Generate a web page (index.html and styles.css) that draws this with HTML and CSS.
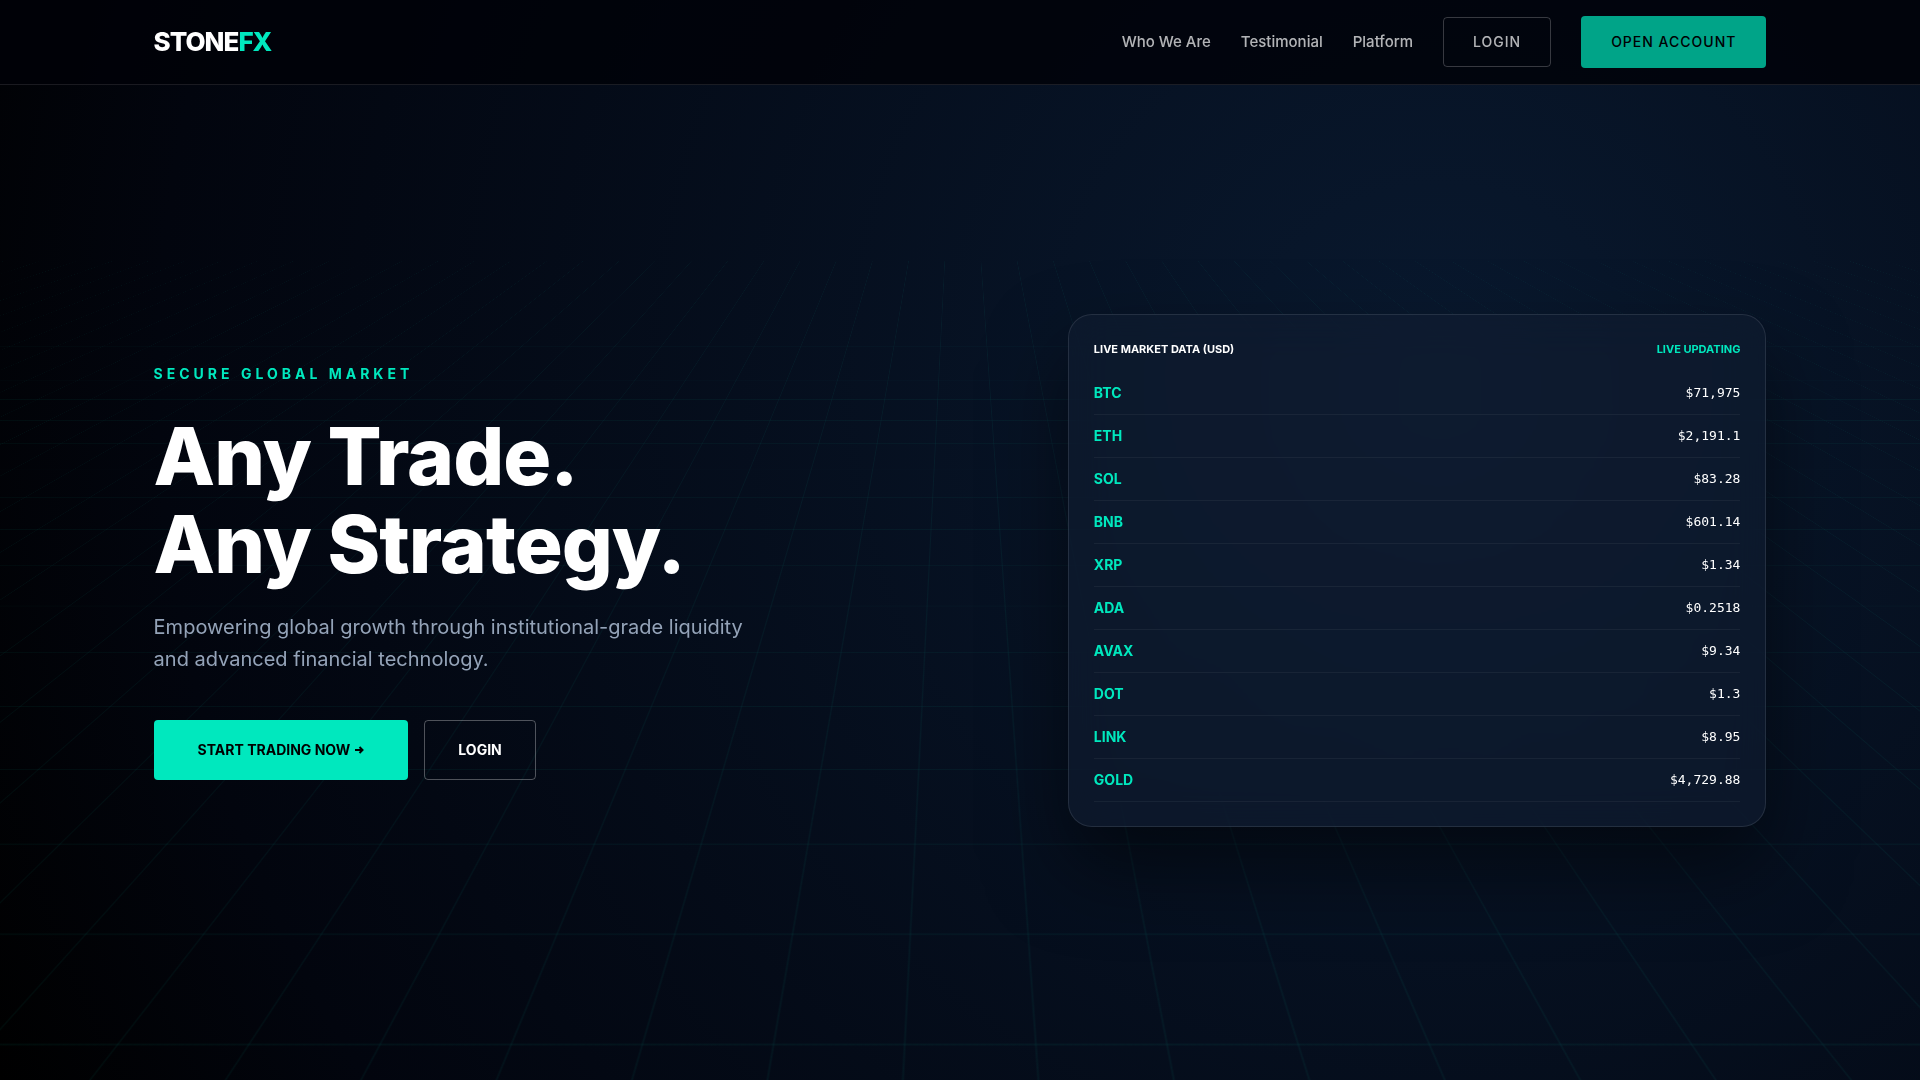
FILE: index.html
```html
<!DOCTYPE html>
<html lang="en">
<head>
<meta charset="utf-8">
<meta name="viewport" content="width=device-width, initial-scale=1">
<title>StoneFX</title>
<link rel="stylesheet" href="styles.css">
</head>
<body>
<div class="backdrop" aria-hidden="true"><div class="backdrop-grid"></div></div>

<header class="site-header">
  <a class="logo" href="#">STONE<span class="logo-accent">FX</span></a>
  <nav class="nav">
    <a class="nav-link" href="#about">Who We Are</a>
    <a class="nav-link" href="#testimonial">Testimonial</a>
    <a class="nav-link" href="#platform">Platform</a>
    <a class="nav-link nav-login" href="#login">LOGIN</a>
    <a class="nav-link nav-open" href="#register">OPEN ACCOUNT</a>
  </nav>
</header>

<main class="hero">
  <section class="intro">
    <p class="eyebrow">SECURE GLOBAL MARKET</p>
    <h1 class="headline">Any Trade.<br>Any Strategy.</h1>
    <p class="lead">Empowering global growth through institutional-grade liquidity and advanced financial technology.</p>
    <div class="actions">
      <a class="btn btn-primary" href="#register">START TRADING NOW
        <svg class="arrow" viewBox="0 0 10 10" aria-hidden="true"><path d="M1 5H8.5M5.5 2L8.5 5L5.5 8"/></svg>
      </a>
      <a class="btn btn-outline" href="#login">LOGIN</a>
    </div>
  </section>

  <section class="market">
    <div class="market-head">
      <h2 class="market-title" id="market-title">LIVE MARKET DATA (USD)</h2>
      <span class="market-status">LIVE UPDATING</span>
    </div>
    <table class="prices" aria-labelledby="market-title">
      <tbody>
        <tr><th scope="row">BTC</th><td>$71,975</td></tr>
        <tr><th scope="row">ETH</th><td>$2,191.1</td></tr>
        <tr><th scope="row">SOL</th><td>$83.28</td></tr>
        <tr><th scope="row">BNB</th><td>$601.14</td></tr>
        <tr><th scope="row">XRP</th><td>$1.34</td></tr>
        <tr><th scope="row">ADA</th><td>$0.2518</td></tr>
        <tr><th scope="row">AVAX</th><td>$9.34</td></tr>
        <tr><th scope="row">DOT</th><td>$1.3</td></tr>
        <tr><th scope="row">LINK</th><td>$8.95</td></tr>
        <tr><th scope="row">GOLD</th><td>$4,729.88</td></tr>
      </tbody>
    </table>
  </section>
</main>
</body>
</html>
```
FILE: styles.css
```css
:root {
  --accent: #00e8be;
  --muted: #94a3b8;
  --line: rgba(255, 255, 255, 0.1);
}

* {
  box-sizing: border-box;
}

body {
  margin: 0;
  min-height: 100vh;
  display: flex;
  flex-direction: column;
  background: #000;
  color: #fff;
  font-family: Inter, "Liberation Sans", sans-serif;
}

a {
  color: inherit;
  text-decoration: none;
}

h1, h2, p {
  margin: 0;
}

/* Tilted grid floor behind the page */
.backdrop {
  position: fixed;
  inset: 0;
  z-index: -1;
  overflow: hidden;
  background: radial-gradient(circle at 75% 35%, #09192f 0%, #02050e 80%, #000 100%);
}

.backdrop-grid {
  position: absolute;
  inset: -50%;
  background-image:
    linear-gradient(rgba(0, 232, 190, 0.05) 1px, transparent 1px),
    linear-gradient(90deg, rgba(0, 232, 190, 0.05) 1px, transparent 1px);
  background-size: 70px 70px;
  background-position: 0 8px;
  transform: perspective(1000px) rotateX(60deg);
}

.site-header {
  display: flex;
  align-items: center;
  justify-content: space-between;
  padding: 16px 8%;
  background: rgba(0, 1, 8, 0.8);
  border-bottom: 1px solid var(--line);
}

.logo {
  font-size: 26px;
  line-height: 32px;
  font-weight: 800;
  letter-spacing: -1px;
}

.logo-accent {
  color: var(--accent);
}

.nav {
  display: flex;
  align-items: center;
  gap: 30px;
}

.nav-link {
  font-size: 15px;
  line-height: 20px;
  font-weight: 500;
  opacity: 0.7;
}

.nav-login {
  padding: 14px 29px;
  border: 1px solid rgba(255, 255, 255, 0.3);
  border-radius: 4px;
  font-size: 14px;
  letter-spacing: 1px;
}

.nav-open {
  padding: 16px 30px;
  border-radius: 4px;
  background: var(--accent);
  color: #000;
  font-size: 14px;
  letter-spacing: 1px;
}

.hero {
  flex: 1;
  display: grid;
  grid-template-columns: 1.2fr 1fr;
  gap: 76px;
  align-items: center;
  padding: 0 8% 24px;
}

.intro {
  padding-top: 4px;
}

.eyebrow {
  margin-bottom: 30px;
  color: var(--accent);
  font-size: 14px;
  line-height: 16px;
  font-weight: 700;
  letter-spacing: 4px;
}

.headline {
  font-size: 80px;
  line-height: 88px;
  font-weight: 800;
  letter-spacing: -1px;
}

.lead {
  max-width: 600px;
  margin-top: 23px;
  color: var(--muted);
  font-size: 20px;
  line-height: 32px;
}

.actions {
  display: flex;
  gap: 16px;
  margin-top: 45px;
}

.btn {
  display: flex;
  align-items: center;
  justify-content: center;
  gap: 4px;
  height: 60px;
  border-radius: 4px;
  font-size: 14px;
  font-weight: 700;
}

.btn-primary {
  padding: 0 44px;
  background: var(--accent);
  color: #000;
}

.btn-outline {
  padding: 0 33px;
  border: 1px solid rgba(255, 255, 255, 0.3);
}

.arrow {
  width: 10px;
  height: 10px;
  fill: none;
  stroke: currentColor;
  stroke-width: 2;
}

.market {
  padding: 25px 25px 24px;
  background: rgba(16, 29, 48, 0.6);
  border: 1px solid var(--line);
  border-radius: 24px;
  box-shadow: 0 40px 80px rgba(0, 0, 0, 0.5);
  backdrop-filter: blur(20px);
}

.market-head {
  display: flex;
  justify-content: space-between;
  margin-bottom: 13px;
  font-size: 11px;
  line-height: 18px;
  font-weight: 700;
}

.market-title {
  font-size: inherit;
  font-weight: inherit;
}

.market-status {
  color: var(--accent);
}

.prices {
  width: 100%;
  border-collapse: collapse;
}

.prices th,
.prices td {
  height: 43px;
  padding: 0;
  border-bottom: 1px solid rgba(255, 255, 255, 0.05);
}

.prices th {
  color: var(--accent);
  font-size: 14px;
  font-weight: 700;
  text-align: left;
}

.prices td {
  font-family: "DejaVu Sans Mono", "Liberation Mono", monospace;
  font-size: 13px;
  line-height: 18px;
  text-align: right;
}
```
